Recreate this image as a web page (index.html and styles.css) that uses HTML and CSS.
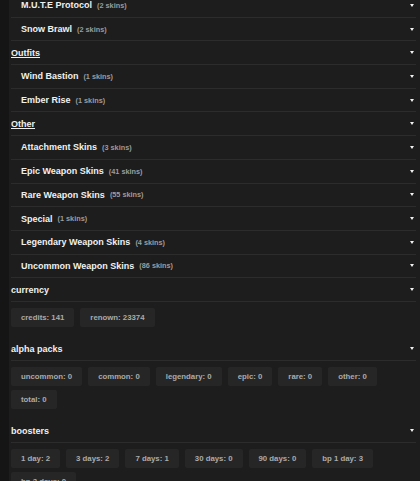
FILE: index.html
```html
<!DOCTYPE html>
<html lang="en">
<head>
  <meta charset="UTF-8" />
  <meta name="viewport" content="width=device-width, initial-scale=1.0"/>
  <title>Inventory</title>
  <link rel="stylesheet" href="styles.css">
</head>
<body>
  <main class="inventory">
    <div class="row sub"><span class="name">M.U.T.E Protocol</span><span class="count">(2 skins)</span><span class="caret"></span></div>
    <div class="row sub"><span class="name">Snow Brawl</span><span class="count">(2 skins)</span><span class="caret"></span></div>

    <div class="row group"><span class="name">Outfits</span><span class="caret"></span></div>
    <div class="row sub"><span class="name">Wind Bastion</span><span class="count">(1 skins)</span><span class="caret"></span></div>
    <div class="row sub"><span class="name">Ember Rise</span><span class="count">(1 skins)</span><span class="caret"></span></div>

    <div class="row group"><span class="name">Other</span><span class="caret"></span></div>
    <div class="row sub"><span class="name">Attachment Skins</span><span class="count">(3 skins)</span><span class="caret"></span></div>
    <div class="row sub"><span class="name">Epic Weapon Skins</span><span class="count">(41 skins)</span><span class="caret"></span></div>
    <div class="row sub"><span class="name">Rare Weapon Skins</span><span class="count">(55 skins)</span><span class="caret"></span></div>
    <div class="row sub"><span class="name">Special</span><span class="count">(1 skins)</span><span class="caret"></span></div>
    <div class="row sub"><span class="name">Legendary Weapon Skins</span><span class="count">(4 skins)</span><span class="caret"></span></div>
    <div class="row sub"><span class="name">Uncommon Weapon Skins</span><span class="count">(86 skins)</span><span class="caret"></span></div>

    <section class="stats">
      <div class="row title"><span class="name">currency</span><span class="caret"></span></div>
      <div class="chips">
        <span class="chip">credits: 141</span>
        <span class="chip">renown: 23374</span>
      </div>
    </section>

    <section class="stats">
      <div class="row title"><span class="name">alpha packs</span><span class="caret"></span></div>
      <div class="chips">
        <span class="chip">uncommon: 0</span>
        <span class="chip">common: 0</span>
        <span class="chip">legendary: 0</span>
        <span class="chip">epic: 0</span>
        <span class="chip">rare: 0</span>
        <span class="chip">other: 0</span>
        <span class="chip">total: 0</span>
      </div>
    </section>

    <section class="stats">
      <div class="row title"><span class="name">boosters</span><span class="caret"></span></div>
      <div class="chips">
        <span class="chip">1 day: 2</span>
        <span class="chip">3 days: 2</span>
        <span class="chip">7 days: 1</span>
        <span class="chip">30 days: 0</span>
        <span class="chip">90 days: 0</span>
        <span class="chip">bp 1 day: 3</span>
        <span class="chip">bp 3 days: 0</span>
      </div>
    </section>
  </main>
</body>
</html>
```
FILE: styles.css
```css
* {
  margin: 0;
  padding: 0;
  box-sizing: border-box;
}

html {
  background-color: #151515;
}

body {
  margin-left: 9px;
  min-height: 100vh;
  background-color: #1d1d1d;
  color: #f0f0f0;
  font-family: 'Liberation Sans', Arial, sans-serif;
  overflow: hidden;
}

/* page is shown scrolled a little */
.inventory {
  margin-top: -6px;
  padding: 0 4px 0 2px;
}

.row {
  display: flex;
  align-items: center;
  height: 23.7px;
  border-bottom: 1px solid #2c2c2c;
  padding-right: 2px;
}

.row.sub {
  padding-left: 10px;
}

.name {
  font-size: 9px;
  font-weight: bold;
  color: #f0f0f0;
}

.group .name {
  text-decoration: underline;
}

.count {
  margin-left: 5px;
  font-size: 7.3px;
  font-weight: bold;
  color: #9c9c9c;
}

.caret {
  margin-left: auto;
  width: 0;
  height: 0;
  border-left: 2.5px solid transparent;
  border-right: 2.5px solid transparent;
  border-top: 3px solid #f2f2f2;
}

.chips {
  display: flex;
  flex-wrap: wrap;
  gap: 4px 6px;
  padding: 6px 0 10.5px;
}

.chip {
  display: flex;
  align-items: center;
  height: 19px;
  padding: 0 10px;
  background-color: #262626;
  border-radius: 2px;
  color: #ababab;
  font-size: 7.8px;
  font-weight: bold;
}
```
